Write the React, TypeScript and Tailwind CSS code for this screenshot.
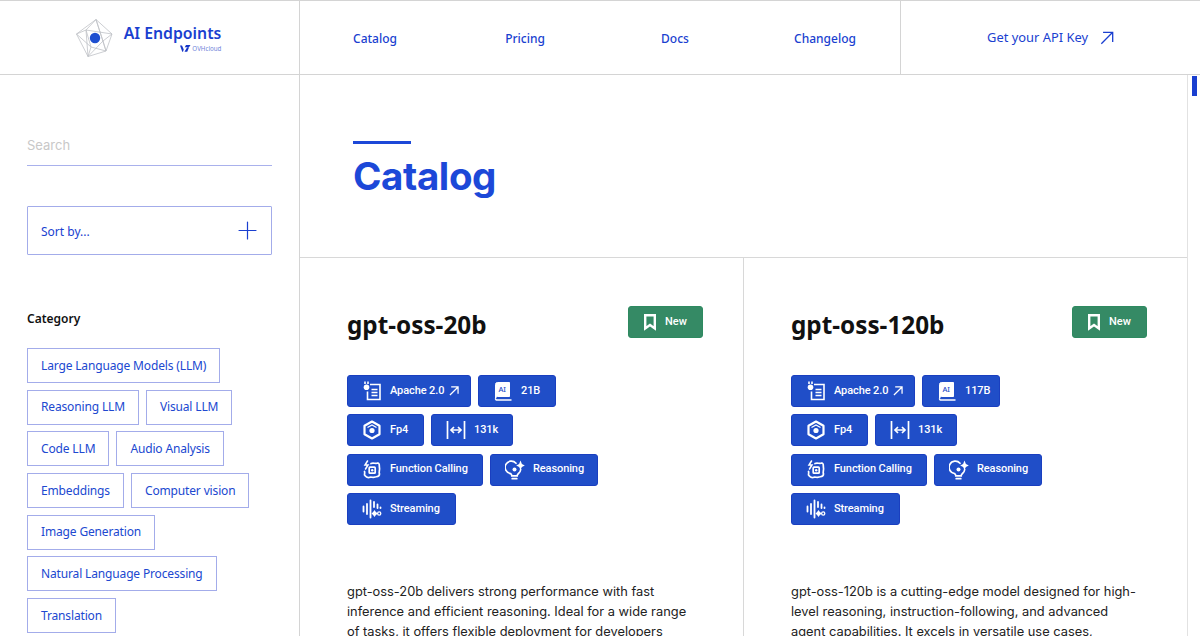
import type { ReactNode } from "react";
import { Plus } from "lucide-react";

const plex = "font-['Noto_Sans','Open_Sans',sans-serif]";

const Arrow = ({ size, width = 1.5 }: { size: number; width?: number }) => (
  <svg width={size} height={size} viewBox="0 0 16 16" fill="none" stroke="currentColor" strokeWidth={width} className="shrink-0">
    <path d="M1.5 14.5L14.5 1.5M3.5 1.5H14.5V12.5" />
  </svg>
);

const LogoMark = () => (
  <svg width="37" height="38" viewBox="0 0 37 38" fill="none" className="shrink-0">
    <g stroke="#bfc2c7" strokeWidth="0.8">
      <path d="M20 0.5L36 15L30 32L12 37.5L0.5 15Z" />
      <path d="M20 0.5L27 22L12 37.5M20 0.5L10 11L0.5 15M36 15L10 11L15 28L30 32M36 15L27 22L30 32M0.5 15L15 28L12 37.5M10 11L12 37.5M20 0.5L30 32" />
    </g>
    <circle cx="19" cy="19" r="5.2" fill="#1e4fd0" />
  </svg>
);

const OvhMark = () => (
  <svg width="11" height="7" viewBox="0 0 22 14" fill="#1536c8" className="shrink-0">
    <path d="M0 1h4l3.5 8L6 13.5H4.5zM9 13.5L14 5h4l-3.5 8.5zM12 0h9l-3 4.5h-8.5z" />
  </svg>
);

const LicenseIcon = () => (
  <svg width="20" height="20" viewBox="0 0 20 20" fill="none" stroke="#fff" strokeWidth="1.6">
    <path d="M8 3.5H18V18.5H5.5V10.5" />
    <circle cx="4.5" cy="6.2" r="2.8" fill="#fff" stroke="none" />
    <path d="M3 0.5V3M6 0.5V3" />
    <path d="M9.5 8.5H15.5M9.5 11.5H15.5M9.5 14.5H15.5" strokeWidth="1.4" />
  </svg>
);

const BookIcon = () => (
  <svg width="20" height="20" viewBox="0 0 20 20" fill="none">
    <path d="M2.5 3.5A2 2 0 0 1 4.5 1.5H16.5V15.5H4.5A2 2 0 0 0 2.5 17.5Z" fill="#fff" stroke="#fff" strokeWidth="1" />
    <path d="M2.5 17.5A1.5 1.5 0 0 0 4.5 19H18.5" stroke="#fff" strokeWidth="1.5" />
    <text x="5.4" y="11" fontSize="7.5" fontWeight="500" fill="#1f4fc8" fontFamily="'Noto Sans',sans-serif">AI</text>
  </svg>
);

const CubeIcon = () => (
  <svg width="20" height="20" viewBox="0 0 20 20" fill="none" stroke="#fff" strokeWidth="2.2" strokeLinejoin="round">
    <path d="M10 1.5L17.5 5.8V14.2L10 18.5L2.5 14.2V5.8Z" />
    <path d="M5.5 7.5L10 5L14.5 7.5" strokeWidth="1.3" />
    <circle cx="10" cy="10.5" r="2.6" fill="#fff" stroke="none" />
  </svg>
);

const WidthIcon = () => (
  <svg width="20" height="20" viewBox="0 0 20 20" fill="none" stroke="#fff">
    <path d="M1.5 1V19M18.5 1V19" strokeWidth="1.7" />
    <path d="M6 10H14" strokeWidth="1.5" />
    <path d="M8 7L5 10L8 13M12 7L15 10L12 13" strokeWidth="1.7" />
  </svg>
);

const FunctionIcon = () => (
  <svg width="20" height="20" viewBox="0 0 20 20" fill="none" stroke="#fff" strokeWidth="1.7" strokeLinecap="round">
    <path d="M9 3.5C11 2.5 14 4 16 3C18 3.5 17 6 17.5 8C18 10 16.5 12 17.5 14C17.5 17 15 16.5 13 17C11 18 9 16.5 7 17.5C4 18 3.5 16 2.5 15C2.5 13.5 3 12.5 2.5 11.5" />
    <path d="M5.5 1L3 5H6L3.5 9" strokeWidth="1.5" />
    <rect x="7.2" y="7.2" width="6" height="6" rx="0.8" />
    <circle cx="10.2" cy="10.2" r="1.2" fill="#fff" stroke="none" />
  </svg>
);

const BulbIcon = () => (
  <svg width="20" height="20" viewBox="0 0 20 20" fill="none" stroke="#fff" strokeWidth="1.7" strokeLinecap="round">
    <path d="M11 3.3A6.2 6.2 0 1 0 5.5 13.5C6.5 14.3 6.8 15 6.8 15.8H12.2C12.2 15 12.5 14.3 13.5 13.5A6 6 0 0 0 15.7 9.5" />
    <path d="M7.2 18.7H11.8" />
    <path d="M15.5 0.5L16.9 4.1L19.8 5.5L16.9 6.9L15.5 10L14.1 6.9L11.2 5.5L14.1 4.1Z" fill="#fff" stroke="none" />
    <circle cx="9.5" cy="9.5" r="2" fill="#fff" stroke="none" />
  </svg>
);

const WaveIcon = () => (
  <svg width="20" height="20" viewBox="0 0 20 20" fill="none" stroke="#fff" strokeWidth="1.8" strokeLinecap="round">
    <path d="M1.5 7.5V12.5M5 5V15M8.5 1.5V18.5M12 3V8M15.5 5.5V9M18.5 8.5V9" />
    <path d="M12.5 11L13.9 13.1L16 14.5L13.9 15.9L12.5 18L11.1 15.9L9.5 14.5L11.1 13.1Z" fill="#fff" stroke="none" />
    <circle cx="17.2" cy="14.5" r="1.6" strokeWidth="1.3" />
  </svg>
);

const BookmarkIcon = () => (
  <svg width="12" height="17" viewBox="0 0 12 17" fill="none" stroke="#fff" strokeWidth="2.4" className="shrink-0">
    <path d="M1.2 1.2H10.8V14.5L6 11L1.2 14.5Z" />
  </svg>
);

const Chip = ({ icon, children, width }: { icon: ReactNode; children: ReactNode; width: string }) => (
  <span
    className={`flex h-8 items-center gap-[8px] rounded-[3px] border border-[#1a3fc0] bg-[#204ec8] pl-[14px] font-['Roboto',sans-serif] text-[11px] font-medium tracking-[-0.1px] text-white ${width}`}
  >
    {icon}
    <span className="flex items-center gap-[5px] whitespace-nowrap">{children}</span>
  </span>
);

const ModelCard = ({ name, size, children, last }: { name: string; size: string; children: ReactNode; last?: boolean }) => (
  <article className={`flex-1 pt-[48px] pr-[40px] pl-[47px] ${last ? "" : "border-r border-[#d8d8d8]"}`}>
    <div className="flex items-start justify-between">
      <h2 className={`${plex} text-[24.3px] leading-[38px] font-bold text-[#111]`}>{name}</h2>
      <span className="flex h-[32px] w-[75px] items-center gap-[9px] rounded-[3px] border border-[#2e8a60] bg-[#358a65] pl-[15px] font-['Roboto',sans-serif] text-[11px] font-medium text-white">
        <BookmarkIcon />
        New
      </span>
    </div>
    <div className="mt-[31px] flex flex-col gap-[7.3px]">
      <div className="flex gap-[7px]">
        <Chip icon={<LicenseIcon />} width="w-[124px]">
          Apache 2.0
          <Arrow size={10} width={2} />
        </Chip>
        <Chip icon={<BookIcon />} width="w-[78px]">{size}</Chip>
      </div>
      <div className="flex gap-[7px]">
        <Chip icon={<CubeIcon />} width="w-[77px]">Fp4</Chip>
        <Chip icon={<WidthIcon />} width="w-[82px]">131k</Chip>
      </div>
      <div className="flex gap-[7px]">
        <Chip icon={<FunctionIcon />} width="w-[136px]">Function Calling</Chip>
        <Chip icon={<BulbIcon />} width="w-[108px]">Reasoning</Chip>
      </div>
      <div className="flex">
        <Chip icon={<WaveIcon />} width="w-[109px]">Streaming</Chip>
      </div>
    </div>
    <p className="mt-[57px] pr-[8px] font-['Inter',sans-serif] text-[12.85px] leading-[20px] text-[#222]">{children}</p>
  </article>
);

const categories = [
  ["Large Language Models (LLM)"],
  ["Reasoning LLM", "Visual LLM"],
  ["Code LLM", "Audio Analysis"],
  ["Embeddings", "Computer vision"],
  ["Image Generation"],
  ["Natural Language Processing"],
  ["Translation"],
];

const App = () => {
  return (
    <div className={`${plex} flex h-[636px] w-[1200px] flex-col overflow-hidden bg-white`}>
      {/* Header */}
      <header className="flex h-[75px] shrink-0 border-t border-b border-[#d4d4d4]">
        <div className="flex w-[300px] items-center justify-center gap-[11px] border-r border-[#d4d4d4] pr-[2px]">
          <LogoMark />
          <div className="flex flex-col items-end pb-[1px]">
            <span className="text-[15.8px] leading-[22px] font-semibold text-[#1a3fd0]">AI Endpoints</span>
            <span className="flex items-center gap-[1px] text-[6.2px] leading-[9px] text-[#6f84da]">
              <OvhMark />
              OVHcloud
            </span>
          </div>
        </div>
        <nav className="flex w-[600px] items-center justify-around pt-[2px] text-[12px] font-medium text-[#1a3fd0]">
          <a className="w-[150px] text-center">Catalog</a>
          <a className="w-[150px] text-center">Pricing</a>
          <a className="w-[150px] text-center">Docs</a>
          <a className="w-[150px] text-center">Changelog</a>
        </nav>
        <a className="flex flex-1 items-center justify-center gap-[12px] border-l border-[#d4d4d4] pt-[1px] text-[12.9px] text-[#1a3fd0]">
          Get your API Key
          <Arrow size={14} />
        </a>
      </header>

      <div className="flex min-h-0 flex-1">
        {/* Filters */}
        <aside className="w-[300px] shrink-0 border-r border-[#d4d4d4] px-[27px]">
          <div className="mt-[60px] h-[31px] border-b border-[#a9b1ec] font-['Inter',sans-serif] text-[13px] leading-[20px] text-[#c8c8c8]">
            Search
          </div>
          <div className="mt-[40px] flex h-[49px] items-center justify-between rounded-[1px] border border-[#a3acea] pt-[2px] pr-[9px] pl-[13px] text-[12px] text-[#1a3fd0]">
            Sort by...
            <Plus size={29} strokeWidth={1} className="-mt-[2px]" />
          </div>
          <h3 className="mt-[54px] text-[12px] leading-[20px] font-semibold text-[#111]">Category</h3>
          <div className="mt-[19px] flex flex-col gap-[6.7px]">
            {categories.map((row) => (
              <div key={row[0]} className="flex gap-[7px]">
                {row.map((label) => (
                  <span
                    key={label}
                    className="flex h-[35px] items-center whitespace-nowrap border border-[#a3acea] px-[13px] text-[12px] tracking-[-0.15px] text-[#2048d0]"
                  >
                    {label}
                  </span>
                ))}
              </div>
            ))}
          </div>
        </aside>

        {/* Catalog */}
        <main className="w-[888px] shrink-0 border-r border-[#e2e2e2]">
          <div className="h-[183px] border-b border-[#d8d8d8] pt-[66px] pl-[53px]">
            <div className="h-[3px] w-[58px] bg-[#1c48d8]" />
            <h1 className="mt-[4px] font-['Inter',sans-serif] text-[38.5px] leading-[56px] font-bold tracking-[-0.4px] text-[#1c48d8]">
              Catalog
            </h1>
          </div>
          <div className="flex">
            <ModelCard name="gpt-oss-20b" size="21B">
              gpt-oss-20b delivers strong performance with fast inference and efficient reasoning. Ideal for a wide range
              of tasks, it offers flexible deployment for developers
            </ModelCard>
            <ModelCard name="gpt-oss-120b" size="117B" last>
              gpt-oss-120b is a cutting-edge model designed for high-level reasoning, instruction-following, and advanced
              agent capabilities. It excels in versatile use cases,
            </ModelCard>
          </div>
        </main>

        {/* Scroll track */}
        <div className="flex flex-1 justify-center pt-px">
          <div className="h-[20px] w-[5px] bg-[#1a3fd0]" />
        </div>
      </div>
    </div>
  );
};

export default App;
